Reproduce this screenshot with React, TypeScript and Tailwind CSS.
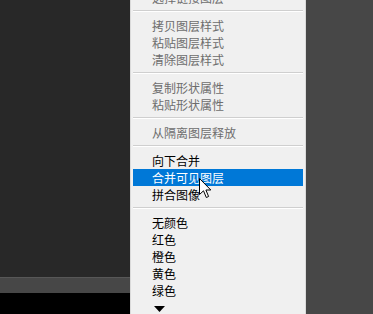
import React from 'react'

type Entry = { label?: string; disabled?: boolean; active?: boolean; sep?: boolean }

const entries: Entry[] = [
  { label: '选择链接图层', disabled: true },
  { sep: true },
  { label: '拷贝图层样式', disabled: true },
  { label: '粘贴图层样式', disabled: true },
  { label: '清除图层样式', disabled: true },
  { sep: true },
  { label: '复制形状属性', disabled: true },
  { label: '粘贴形状属性', disabled: true },
  { sep: true },
  { label: '从隔离图层释放', disabled: true },
  { sep: true },
  { label: '向下合并' },
  { label: '合并可见图层', active: true },
  { label: '拼合图像' },
  { sep: true },
  { label: '无颜色' },
  { label: '红色' },
  { label: '橙色' },
  { label: '黄色' },
  { label: '绿色' },
]

const Separator = () => (
  <div className="h-[11px] pt-[4px] px-[2px]">
    <div className="h-px bg-[#cfcfcf]" />
    <div className="h-px bg-white" />
  </div>
)

const Item = ({ label, disabled, active }: Entry) => (
  <div
    className={
      active
        ? 'mx-[2px] h-[17px] pl-[19px] leading-[17px] bg-[#0078d7] text-white'
        : disabled
        ? 'mx-[2px] h-[17px] pl-[19px] leading-[17px] text-[#6d6d6d]'
        : 'mx-[2px] h-[17px] pl-[19px] leading-[17px] text-black'
    }
  >
    {label}
  </div>
)

export default function App() {
  return (
    <div
      className="relative flex h-[314px] w-[373px] overflow-hidden"
      style={{ fontFamily: '"Noto Sans CJK SC", "Noto Sans", sans-serif' }}
    >
      {/* left canvas area */}
      <div className="flex w-[130px] flex-col bg-[#282828]">
        <div className="flex-1" />
        <div className="h-[16px] border-t border-[#575757] bg-[#474747]" />
        <div className="h-[21px] bg-black" />
      </div>

      {/* context menu */}
      <div className="w-[176px] border-l border-r border-[#dadada] bg-[#f0f0f0] text-[12px]">
        <div className="-mt-[11px]">
          {entries.map((e, i) =>
            e.sep ? <Separator key={i} /> : <Item key={i} {...e} />
          )}
          <div className="mx-[2px] flex h-[17px] items-center pl-[21px] pt-[2px]">
            <svg width="11" height="6" viewBox="0 0 11 6">
              <path d="M0 0 H11 L5.5 6 Z" fill="#000" />
            </svg>
          </div>
        </div>
      </div>

      {/* right panel */}
      <div className="flex-1 bg-[#474747]" />

      {/* mouse pointer */}
      <svg
        className="absolute left-[199px] top-[178px]"
        width="13"
        height="21"
        viewBox="0 0 13 21"
      >
        <path
          d="M0.5 0.5 V16.5 L4.5 12.8 L7.3 19.5 L9.6 18.5 L6.9 12 H11.8 Z"
          fill="#fff"
          stroke="#000"
          strokeWidth="1"
          strokeLinejoin="miter"
        />
      </svg>
    </div>
  )
}
